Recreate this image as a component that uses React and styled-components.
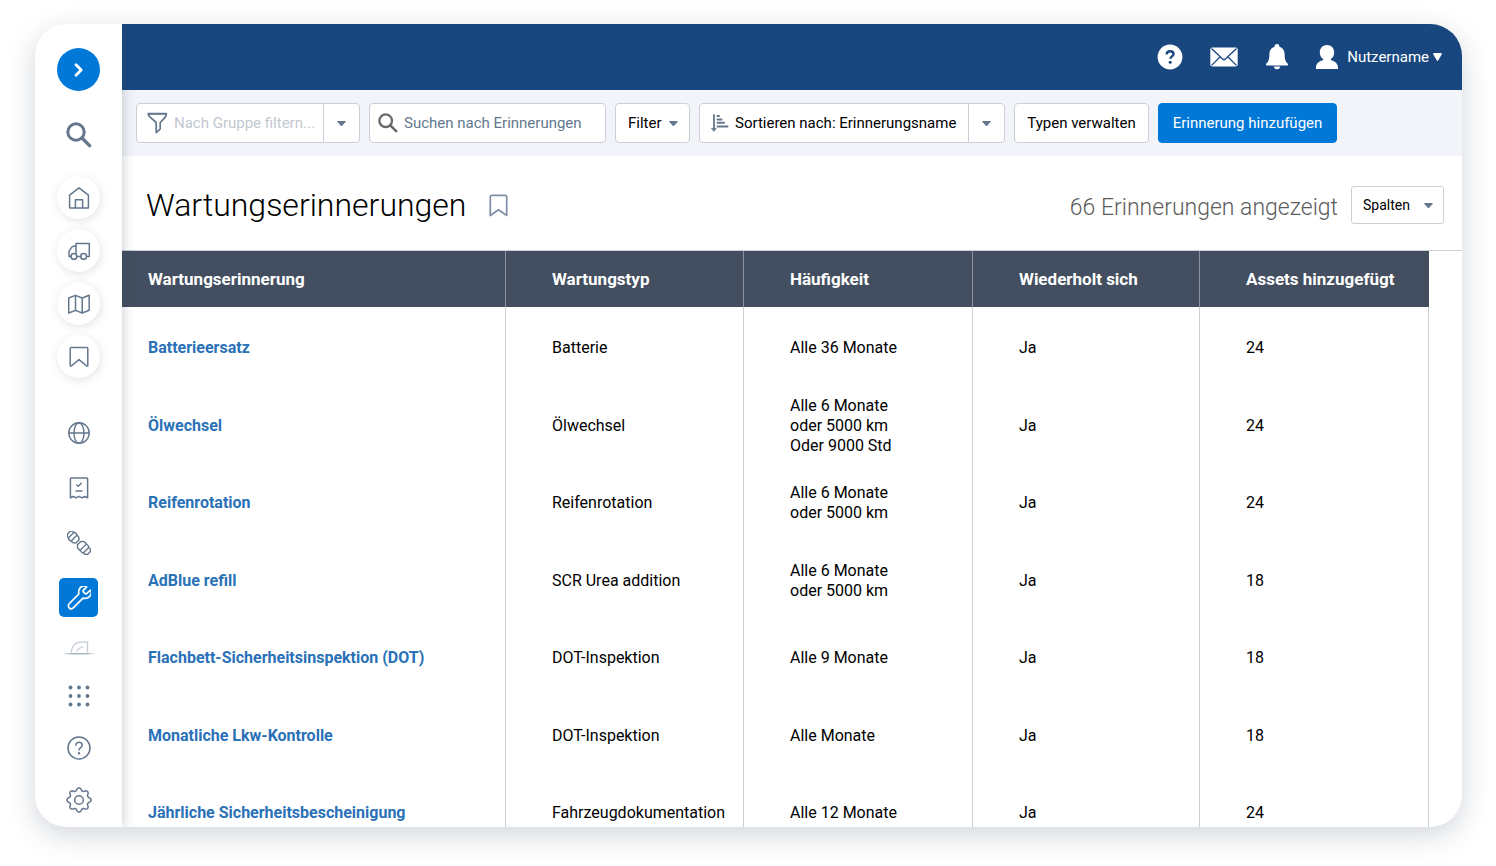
import React from "react";
import styled, { createGlobalStyle, css } from "styled-components";

const slate = "#64778d";
const line = "#cbcfd6";

const GlobalStyle = createGlobalStyle`
  * { box-sizing: border-box; }
  body { margin: 0; background: #fff; font-family: Roboto, "Liberation Sans", sans-serif; color: #000; }
  button, input { font: inherit; color: inherit; margin: 0; }
  button { cursor: pointer; padding: 0; border: 0; background: none; }
  svg { display: block; flex: none; }
`;

const Page = styled.div`
  height: 100vh;
  padding: 24px 34px 39px 35px;
  display: flex;
`;

const Shell = styled.div`
  flex: 1;
  min-width: 0;
  display: flex;
  overflow: hidden;
  border-radius: 32px;
  background: #fff;
  box-shadow: 0 8px 28px rgba(50, 70, 90, 0.22);
`;

const Sidebar = styled.nav`
  position: relative;
  z-index: 1;
  flex: none;
  width: 87px;
  padding-top: 24px;
  display: flex;
  flex-direction: column;
  align-items: center;
  background: #fff;
  color: ${slate};
  box-shadow: 0 0 12px rgba(50, 65, 85, 0.3);
`;

const Group = styled.div`
  display: flex;
  flex-direction: column;
  align-items: center;
  gap: ${(p) => p.$gap}px;
  margin-top: ${(p) => p.$top}px;
`;

const RoundButton = styled.button`
  width: 43px;
  height: 43px;
  border-radius: 50%;
  display: grid;
  place-items: center;
  ${(p) => p.$kind === "primary" && css`background: #0078d7; color: #fff;`}
  ${(p) => p.$kind === "raised" && css`background: #fff; box-shadow: 1px 2px 8px rgba(60, 80, 100, 0.16);`}
`;

const NavButton = styled.button`
  width: 39px;
  height: 39px;
  border-radius: 5px;
  display: grid;
  place-items: center;
  ${(p) => p.$active && css`background: #0078d7; color: #fff;`}
`;

const Fold = styled.div`
  margin-top: 24px;
  height: 14px;
  overflow: hidden;
`;

const Main = styled.main`
  flex: 1;
  min-width: 0;
  display: flex;
  flex-direction: column;
`;

const TopBar = styled.header`
  flex: none;
  height: 66px;
  padding-right: 20px;
  display: flex;
  align-items: center;
  justify-content: flex-end;
  gap: 27px;
  background: #17477e;
  color: #fff;
`;

const IconButton = styled.button`
  display: grid;
  place-items: center;
`;

const UserButton = styled.button`
  display: flex;
  align-items: center;
  gap: 9px;
  font-size: 15px;
  line-height: 20px;
`;

const UserLabel = styled.span`
  display: flex;
  align-items: center;
  gap: 4px;
`;

const Toolbar = styled.div`
  flex: none;
  height: 66px;
  padding: 0 14px;
  display: flex;
  align-items: center;
  gap: 9px;
  background: #f3f4f9;
  font-size: 15px;
  line-height: 20px;
`;

const Box = styled.div`
  display: flex;
  align-items: stretch;
  height: 40px;
  width: ${(p) => p.$width}px;
  background: #fff;
  border: 1px solid ${line};
  border-radius: 4px;
`;

const Field = styled.label`
  flex: 1;
  min-width: 0;
  display: flex;
  align-items: center;
  gap: 6px;
  padding-left: ${(p) => p.$left}px;
  color: ${slate};
`;

const TextInput = styled.input`
  flex: 1;
  min-width: 0;
  padding: 0;
  border: 0;
  outline: 0;
  background: none;
  &::placeholder { color: ${(p) => (p.$faint ? "#c3c8d0" : slate)}; opacity: 1; }
`;

const Drop = styled.button`
  width: 36px;
  display: grid;
  place-items: center;
  border-left: 1px solid ${line};
`;

const SortButton = styled.button`
  flex: 1;
  display: flex;
  align-items: center;
  gap: 6px;
  padding-left: 11px;
`;

const ToolButton = styled.button`
  height: ${(p) => (p.$small ? 38 : 40)}px;
  width: ${(p) => p.$width}px;
  display: flex;
  align-items: center;
  justify-content: ${(p) => (p.$menu ? "space-between" : "center")};
  padding: 0 ${(p) => (p.$menu ? (p.$small ? 10 : 11) : 0)}px 0 ${(p) => (p.$menu ? (p.$small ? 11 : 12) : 0)}px;
  font-size: ${(p) => (p.$small ? 14 : 15)}px;
  border: 1px solid ${(p) => (p.$primary ? "#0078d7" : line)};
  border-radius: ${(p) => (p.$small ? 3 : 4)}px;
  background: ${(p) => (p.$primary ? "#0078d7" : "#fff")};
  color: ${(p) => (p.$primary ? "#fff" : "#000")};
`;

const TitleRow = styled.div`
  flex: none;
  height: 95px;
  padding: 4px 18px 0 24px;
  display: flex;
  align-items: center;
  border-bottom: 1px solid ${line};
`;

const Title = styled.h1`
  margin: 0 23px 0 0;
  font-size: 32px;
  line-height: 40px;
  font-weight: 300;
`;

const Count = styled.span`
  margin: 0 13px 0 auto;
  padding-top: 6px;
  font-size: 23px;
  line-height: 32px;
  font-weight: 300;
  color: #5c5c5c;
`;

const TableArea = styled.div`
  flex: 1;
  min-height: 0;
  overflow: hidden;
  padding-right: 33px;
`;

const Table = styled.table`
  width: 100%;
  table-layout: fixed;
  border-collapse: separate;
  border-spacing: 0;
  font-size: 16px;
  line-height: 20px;
`;

const Col = styled.col`
  width: ${(p) => (p.$width ? `${p.$width}px` : "auto")};
`;

const HeadCell = styled.th`
  height: 56px;
  padding: 0 0 0 46px;
  text-align: left;
  font-size: 17px;
  font-weight: 700;
  white-space: nowrap;
  color: #fff;
  background: #434f60;
  border-right: 1px solid #8a94a1;
  &:first-child { padding-left: 26px; }
  &:last-child { border-right-color: #434f60; }
`;

const Row = styled.tr`
  height: 77px;
  &:nth-child(even) { height: 78px; }
`;

const Cell = styled.td`
  padding: 5px 0 0 46px;
  vertical-align: middle;
  white-space: pre-line;
  border-right: 1px solid ${line};
  &:first-child { padding-left: 26px; }
`;

const NameLink = styled.a`
  color: #2a71b8;
  font-weight: 700;
  text-decoration: none;
`;

const Stroke = ({ size = 24, width = 1.5, children }) => (
  <svg width={size} height={size} viewBox="0 0 24 24" fill="none" stroke="currentColor" strokeWidth={width} strokeLinecap="round" strokeLinejoin="round" aria-hidden="true">
    {children}
  </svg>
);

const Caret = ({ width = 9, height = 5, color = slate }) => (
  <svg width={width} height={height} viewBox="0 0 10 6" preserveAspectRatio="none" fill={color} aria-hidden="true">
    <path d="M1 0h8a.8.8 0 0 1 .6 1.2L5.7 5.6a1 1 0 0 1-1.4 0L.4 1.2A.8.8 0 0 1 1 0z" />
  </svg>
);

const ChevronIcon = () => <Stroke size={24} width={2.8}><path d="M9 6.8l5.200 5.200-5.200 5.200" /></Stroke>;

const SearchIcon = ({ size, color }) => (
  <svg width={size} height={size} viewBox="0 0 26 26" fill="none" stroke={color} aria-hidden="true">
    <circle cx="10" cy="10" r="8.2" strokeWidth="3" />
    <path d="M16 16l7.600 7.600" strokeWidth="3.400" strokeLinecap="round" />
  </svg>
);

const HomeIcon = () => (
  <Stroke><path d="M2.600 9.200 12 1.800l9.400 7.400V22H2.600z" /><path d="M8.400 21.800v-8h7.200v8" /></Stroke>
);

const TruckIcon = () => (
  <Stroke>
    <path d="M9.600 17.600h4.400M19.500 17.600h2.800V4.400H9V14.600" />
    <path d="M9 7.200H6.400a2 2 0 0 0-1.800 1.100L2.600 11.400a3 3 0 0 0-.6 1.800v4.400h2" />
    <circle cx="6.900" cy="17.400" r="2.900" />
    <circle cx="16.600" cy="17.400" r="2.900" />
  </Stroke>
);

const MapIcon = () => (
  <Stroke><path d="M1.700 6 8.500 3.400 15.200 6l7-2.800v15L15.200 21 8.500 18.400 1.700 21z" /><path d="M8.500 3.400v15M15.200 6v15" /></Stroke>
);

const BookmarkIcon = () => (
  <Stroke><path d="M4.200 2.600h15.600a1 1 0 0 1 1 1v16.600a.8.800 0 0 1-1.400.6L12 14.600l-7.400 6.200a.8.800 0 0 1-1.400-.6V3.600a1 1 0 0 1 1-1z" /></Stroke>
);

const TitleBookmarkIcon = () => (
  <svg width="19" height="23" viewBox="0 0 19 23" fill="none" stroke="#7d8ea5" strokeWidth="1.700" strokeLinejoin="round" aria-hidden="true">
    <path d="M3 1.300h13a1.700 1.700 0 0 1 1.700 1.700v18.500l-8.200-5.700-8.200 5.700V3A1.700 1.700 0 0 1 3 1.300z" />
  </svg>
);

const GlobeIcon = () => (
  <Stroke width={1.400}>
    <circle cx="12" cy="12" r="10.200" />
    <ellipse cx="12" cy="12" rx="5" ry="10.200" />
    <path d="M2 12h20" />
  </Stroke>
);

const ReceiptIcon = () => (
  <Stroke width={1.500}>
    <path d="M4.200 2h15.600a.8.800 0 0 1 .8.800v19l-2.800-1.300-2.800 1.300-3-1.500-3 1.500-2.800-1.300-2.800 1.300v-19a.8.800 0 0 1 .8-.8z" />
    <path d="M9.800 9l1.500 1.300 3-3M9 15h6" />
  </Stroke>
);

const CouplingIcon = () => (
  <Stroke size={24} width={1.400}>
    <g transform="rotate(45 12 12)">
      <path d="M1 8.200H.2a2.800 3.800 0 0 0 0 7.600H1" />
      <rect x="1" y="7.400" width="4" height="9.200" rx="1.600" />
      <path d="M5 7.900h2.200L9.800 9.600v4.800L7.200 16.100H5" />
      <path d="M18 7.400h-3.400l-2.400 2.200v4.800l2.400 2.200H18" />
      <rect x="18" y="7.400" width="4" height="9.200" rx="1.600" />
      <path d="M22 8.200h1.400a2.800 3.800 0 0 1 0 7.600H22" />
    </g>
  </Stroke>
);

const WrenchIcon = () => (
  <Stroke width={1.700}>
    <path
      transform="rotate(45 12 12)"
      d="M9.600-.6C9.600-1.600 8.800-1.700 8.200-1.200 6.300 0 5.500 2 5.600 4c.1 2.300 1.500 4 3.500 5.200V23a2.900 2.900 0 0 0 5.800 0V9.200c2-1.200 3.400-2.900 3.500-5.200.1-2-.7-4-2.600-5.200-.6-.5-1.400-.4-1.400.6v3.800a1.400 1.400 0 0 1-1.400 1.400H11a1.400 1.400 0 0 1-1.400-1.400z"
    />
  </Stroke>
);

const LeafIcon = () => (
  <svg width="34" height="14" viewBox="0 0 34 14" fill="none" stroke="#a9b4c0" strokeLinecap="round" aria-hidden="true">
    <defs>
      <linearGradient id="fold" x1="0" x2="1" y1="0" y2="0">
        <stop offset="0" stopColor="#9fb0bd" stopOpacity="0" />
        <stop offset=".3" stopColor="#9fb0bd" />
        <stop offset=".7" stopColor="#9fb0bd" />
        <stop offset="1" stopColor="#9fb0bd" stopOpacity="0" />
      </linearGradient>
    </defs>
    <path d="M9.500 11V9.500C10.500 4 14.500 1.200 19 1.200h6.500V11" strokeWidth="1.300" opacity=".7" />
    <path d="M14.500 10.500c1.500-2.600 3.500-4 6.500-4.500" strokeWidth="1.300" opacity=".5" />
    <rect x="0" y="12" width="34" height="1.400" fill="url(#fold)" stroke="none" />
  </svg>
);

const DotsIcon = () => (
  <svg width="22" height="22" viewBox="0 0 22 22" fill="currentColor" aria-hidden="true">
    {[2.500, 11, 19.500].map((y) => [2.500, 11, 19.500].map((x) => <circle key={`${x}-${y}`} cx={x} cy={y} r="1.900" />))}
  </svg>
);

const HelpIcon = () => (
  <Stroke width={1.500}>
    <circle cx="12" cy="12" r="11" />
    <path d="M8.800 9.300c0-1.900 1.400-3 3.200-3s3.200 1.200 3.200 2.900c0 2.300-3.200 2.500-3.200 4.800" />
    <circle cx="12" cy="17.300" r=".5" fill="currentColor" />
  </Stroke>
);

const gearOutline = Array.from({ length: 128 }, (_, i) => {
  const angle = (i / 128) * Math.PI * 2;
  const wave = Math.cos(8 * angle);
  const radius = 9.900 + 1.200 * Math.sign(wave) * Math.pow(Math.abs(wave), 0.700);
  return `${(12 + radius * Math.sin(angle)).toFixed(2)},${(12 - radius * Math.cos(angle)).toFixed(2)}`;
}).join(" ");

const GearIcon = () => (
  <Stroke size={26} width={1.400}>
    <polygon points={gearOutline} />
    <circle cx="12" cy="12" r="4" />
  </Stroke>
);

const FunnelIcon = () => (
  <svg width="21" height="22" viewBox="0 0 21 22" fill="none" stroke="currentColor" strokeWidth="1.700" strokeLinejoin="round" aria-hidden="true">
    <path d="M1.200 1.500h18.200c0 2.500-.9 3.600-6.200 9v6.400l-4 3.700V10.500L2.600 4.600C1.600 3.600 1.200 2.800 1.200 1.500z" />
    <path d="M2 2.200h17" strokeWidth="1.300" />
  </svg>
);

const SortIcon = () => (
  <svg width="18" height="18" viewBox="0 0 18 18" fill="none" stroke={slate} strokeWidth="1.800" strokeLinecap="round" aria-hidden="true">
    <path d="M3 1v14" />
    <path d="M.8 14.400h4.400L3 17.200z" fill={slate} strokeWidth=".8" strokeLinejoin="round" />
    <path d="M6.500 2h1.500M6.500 5.400h4M6.500 8.800h6.500M6.500 12.400h10" strokeWidth="2" />
  </svg>
);

const HelpSolidIcon = () => (
  <svg width="26" height="26" viewBox="0 0 26 26" aria-hidden="true">
    <circle cx="13" cy="13" r="12.400" fill="#fff" />
    <path d="M9.600 10.400c.2-2 1.600-3.100 3.500-3.100 2 0 3.400 1 3.400 2.700 0 2.400-3.100 2.300-3.100 4.800" fill="none" stroke="#17477e" strokeWidth="2.400" />
    <circle cx="13.200" cy="18.200" r="1.500" fill="#17477e" />
  </svg>
);

const MailIcon = () => (
  <svg width="28" height="20" viewBox="0 0 28 20" aria-hidden="true">
    <rect x=".3" y=".6" width="27.400" height="19" rx="2" fill="#fff" />
    <path d="M1.500 1.500 12.600 12a2 2 0 0 0 2.800 0L26.500 1.500M1.500 18.400l8.800-8.600M26.500 18.400l-8.800-8.600" fill="none" stroke="#17477e" strokeWidth="1.300" />
  </svg>
);

const BellIcon = () => (
  <svg width="24" height="26" viewBox="0 0 24 26" fill="#fff" aria-hidden="true">
    <path d="M12 0a2.500 2.500 0 0 1 2.400 2.700c3.500 1 5.200 3.900 5.200 7.300 0 5.500.9 7.400 3 9.500.8.900.5 2-.8 2H2.200c-1.300 0-1.600-1.100-.8-2 2.100-2.100 3-4 3-9.500 0-3.400 1.700-6.300 5.200-7.300A2.500 2.500 0 0 1 12 0z" />
    <path d="M8.600 22.600h6.800a3.500 3.500 0 0 1-6.800 0z" />
  </svg>
);

const UserIcon = () => (
  <svg width="22" height="24" viewBox="0 0 22 24" fill="#fff" aria-hidden="true">
    <path d="M11 0c4.200 0 7.200 3.100 7.200 7.400 0 2.800-1.300 5.300-3.400 6.700l.2 1.100c3.500.8 6.400 2.700 7 6.400V24H0v-2.400c.6-3.700 3.500-5.600 7-6.400l.2-1.100C5.100 12.700 3.800 10.200 3.800 7.400 3.800 3.100 6.800 0 11 0z" />
  </svg>
);

const quickLinks = [
  ["Startseite", HomeIcon],
  ["Fahrzeuge", TruckIcon],
  ["Karte", MapIcon],
  ["Lesezeichen", BookmarkIcon],
];

const sections = [
  ["Übersicht", GlobeIcon],
  ["Berichte", ReceiptIcon],
  ["Motor", CouplingIcon],
  ["Wartung", WrenchIcon],
];

const utilities = [
  ["Apps", DotsIcon],
  ["Hilfe", HelpIcon],
  ["Einstellungen", GearIcon],
];

const columns = [
  ["Wartungserinnerung"],
  ["Wartungstyp", 238],
  ["Häufigkeit", 229],
  ["Wiederholt sich", 227],
  ["Assets hinzugefügt", 229],
];

const reminders = [
  ["Batterieersatz", "Batterie", "Alle 36 Monate", "Ja", 24],
  ["Ölwechsel", "Ölwechsel", "Alle 6 Monate\noder 5000 km\nOder 9000 Std", "Ja", 24],
  ["Reifenrotation", "Reifenrotation", "Alle 6 Monate\noder 5000 km", "Ja", 24],
  ["AdBlue refill", "SCR Urea addition", "Alle 6 Monate\noder 5000 km", "Ja", 18],
  ["Flachbett-Sicherheitsinspektion (DOT)", "DOT-Inspektion", "Alle 9 Monate", "Ja", 18],
  ["Monatliche Lkw-Kontrolle", "DOT-Inspektion", "Alle Monate", "Ja", 18],
  ["Jährliche Sicherheitsbescheinigung", "Fahrzeugdokumentation", "Alle 12 Monate", "Ja", 24],
];

export default function App() {
  return (
    <>
      <GlobalStyle />
      <Page>
        <Shell>
          <Sidebar aria-label="Hauptnavigation">
            <RoundButton $kind="primary" aria-label="Menü öffnen"><ChevronIcon /></RoundButton>
            <Group $top={22} $gap={20}>
              <RoundButton aria-label="Suche"><SearchIcon size={26} color={slate} /></RoundButton>
            </Group>
            <Group $top={20} $gap={10}>
              {quickLinks.map(([label, Icon]) => (
                <RoundButton key={label} $kind="raised" aria-label={label}><Icon /></RoundButton>
              ))}
            </Group>
            <Group $top={35} $gap={16}>
              {sections.map(([label, Icon]) => (
                <NavButton key={label} $active={label === "Wartung"} aria-label={label}><Icon /></NavButton>
              ))}
            </Group>
            <Fold><LeafIcon /></Fold>
            <Group $top={21} $gap={13}>
              {utilities.map(([label, Icon]) => (
                <NavButton key={label} aria-label={label}><Icon /></NavButton>
              ))}
            </Group>
          </Sidebar>
          <Main>
            <TopBar>
              <IconButton aria-label="Hilfe"><HelpSolidIcon /></IconButton>
              <IconButton aria-label="Nachrichten"><MailIcon /></IconButton>
              <IconButton aria-label="Benachrichtigungen"><BellIcon /></IconButton>
              <UserButton aria-haspopup="menu">
                <UserIcon />
                <UserLabel>Nutzername<Caret height={8} color="#fff" /></UserLabel>
              </UserButton>
            </TopBar>
            <Toolbar>
              <Box $width={224}>
                <Field $left={10}>
                  <FunnelIcon />
                  <TextInput $faint aria-label="Nach Gruppe filtern" placeholder="Nach Gruppe filtern..." />
                </Field>
                <Drop aria-label="Gruppen anzeigen"><Caret /></Drop>
              </Box>
              <Box $width={237}>
                <Field $left={8}>
                  <SearchIcon size={20} color="#6a6a6a" />
                  <TextInput aria-label="Suchen nach Erinnerungen" placeholder="Suchen nach Erinnerungen" />
                </Field>
              </Box>
              <ToolButton $menu $width={75} aria-haspopup="menu">Filter<Caret /></ToolButton>
              <Box $width={306}>
                <SortButton><SortIcon />Sortieren nach: Erinnerungsname</SortButton>
                <Drop aria-label="Sortierung wählen"><Caret /></Drop>
              </Box>
              <ToolButton $width={135}>Typen verwalten</ToolButton>
              <ToolButton $primary $width={179}>Erinnerung hinzufügen</ToolButton>
            </Toolbar>
            <TitleRow>
              <Title>Wartungserinnerungen</Title>
              <IconButton aria-label="Seite merken"><TitleBookmarkIcon /></IconButton>
              <Count>66 Erinnerungen angezeigt</Count>
              <ToolButton $menu $small $width={93} aria-haspopup="menu">Spalten<Caret /></ToolButton>
            </TitleRow>
            <TableArea>
              <Table>
                <colgroup>
                  {columns.map(([label, width]) => <Col key={label} $width={width} />)}
                </colgroup>
                <thead>
                  <tr>{columns.map(([label]) => <HeadCell key={label} scope="col">{label}</HeadCell>)}</tr>
                </thead>
                <tbody>
                  {reminders.map(([name, type, frequency, repeats, assets]) => (
                    <Row key={name}>
                      <Cell><NameLink href="#">{name}</NameLink></Cell>
                      <Cell>{type}</Cell>
                      <Cell>{frequency}</Cell>
                      <Cell>{repeats}</Cell>
                      <Cell>{assets}</Cell>
                    </Row>
                  ))}
                </tbody>
              </Table>
            </TableArea>
          </Main>
        </Shell>
      </Page>
    </>
  );
}
